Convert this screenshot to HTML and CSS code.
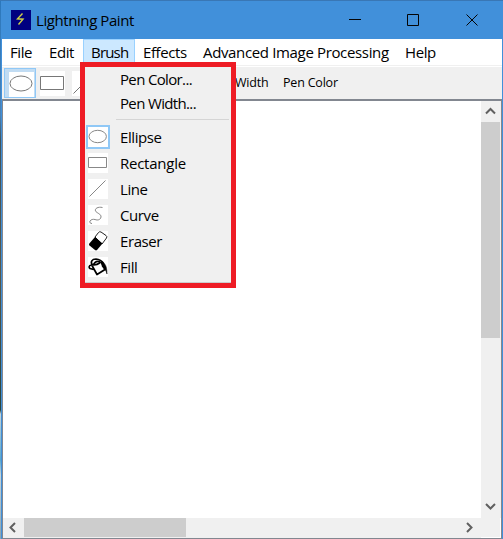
FILE: index.html
```html
<!DOCTYPE html>
<html lang="en">
<head>
<meta charset="utf-8">
<title>Lightning Paint</title>
<link rel="stylesheet" href="styles.css">
</head>
<body>
<div class="desktop">
<div class="window">
  <header class="titlebar">
    <svg class="app-icon" width="20" height="20" viewBox="0 0 20 20"><rect width="20" height="20" fill="#000080"/><path d="M11.500 3.500L6.500 8.800L12 9.200L7.500 14.500" fill="none" stroke="#d0d048" stroke-width="1.400"/></svg>
    <h1 class="title">Lightning Paint</h1>
    <svg class="controls" width="130" height="14" viewBox="0 0 130 14" fill="none" stroke="#050505"><path d="M0 6.500h12M58.500 1.500h11v11h-11zM117.500 1.500l11 11M128.500 1.500l-11 11"/></svg>
  </header>
  <nav class="menubar">
    <span class="item file">File</span><span class="item edit">Edit</span><span class="item brush">Brush</span><span class="item effects">Effects</span><span class="item advanced">Advanced Image Processing</span><span class="item help">Help</span>
  </nav>
  <div class="toolbar">
    <div class="tool selected"><svg width="25" height="25" viewBox="0 0 25 25" fill="none" stroke="#777"><rect width="25" height="25" fill="#fff" stroke="none"/><ellipse cx="12" cy="11.500" rx="11" ry="7.500"/></svg></div>
    <div class="tool rect"><svg width="25" height="25" viewBox="0 0 25 25" fill="none" stroke="#777"><rect width="25" height="25" fill="#fff" stroke="none"/><path d="M.5 5.500h23v13H.5z"/></svg></div>
    <div class="tool line"><svg width="25" height="25" viewBox="0 0 25 25" fill="none" stroke="#777"><rect width="25" height="25" fill="#fff" stroke="none"/><path d="M1.500 22.500l20-20"/></svg></div>
    <span class="label width">Width</span><span class="label color">Pen Color</span>
  </div>
  <main class="workspace">
    <div class="canvas"></div>
    <div class="vscroll">
      <svg class="arrow" width="19" height="21" viewBox="0 0 19 21" fill="none" stroke="#606060" stroke-width="2"><path d="M5 12.500l4.500-4.500 4.500 4.500"/></svg>
      <div class="vthumb"></div>
      <svg class="arrow" width="19" height="21" viewBox="0 0 19 21" fill="none" stroke="#606060" stroke-width="2"><path d="M5 7l4.500 4.500 4.500-4.500"/></svg>
    </div>
    <div class="hscroll">
      <svg class="arrow" width="21" height="19" viewBox="0 0 21 19" fill="none" stroke="#606060" stroke-width="2"><path d="M12 5L7.500 9.500l4.500 4.500"/></svg>
      <div class="hthumb"></div>
      <svg class="arrow" width="21" height="19" viewBox="0 0 21 19" fill="none" stroke="#606060" stroke-width="2"><path d="M7 5l4.500 4.500-4.500 4.500"/></svg>
    </div>
    <div class="corner"></div>
  </main>
</div>
</div>
<div class="menu">
  <div class="plain">Pen Color...</div>
  <div class="plain">Pen Width...</div>
  <div class="separator"></div>
  <div class="row"><span class="icon checked"><svg width="20" height="20" viewBox="0 0 20 20" fill="none" stroke="#888"><ellipse cx="9.700" cy="9.500" rx="8.700" ry="6.200"/></svg></span>Ellipse</div>
  <div class="row"><span class="icon"><svg width="20" height="20" viewBox="0 0 20 20" fill="none" stroke="#888"><path d="M.5 4.500h18v10H.5z"/></svg></span><span class="rectangle">Rectangle</span></div>
  <div class="row"><span class="icon"><svg width="20" height="20" viewBox="0 0 20 20" fill="none" stroke="#888"><path d="M1.500 17.500l16-16"/></svg></span>Line</div>
  <div class="row"><span class="icon"><svg width="20" height="20" viewBox="0 0 20 20" fill="none" stroke="#888"><path d="M14.500 2.500C10 1.500 6.500 3.500 7.500 6c1 2 6 3 5.500 6-.5 3-3.500 3.500-6 2.500-2-.5-4 0-5 1.500-.8 1.500.5 2.500 2 2.500"/></svg></span>Curve</div>
  <div class="row"><span class="icon"><svg width="20" height="20" viewBox="0 0 20 20"><path d="M10.500 1.500Q11.500.3 13 1l5 3.500q1.500 1 .5 2.500l-4.500 6L7 6z" fill="#fff" stroke="#222"/><path d="M7 6l7.500 6.500-5.500 6.500q-1 .8-2 0L1.500 14.500q-1-1-.2-2z" fill="#000"/></svg></span>Eraser</div>
  <div class="row"><span class="icon"><svg width="20" height="20" viewBox="0 0 20 20" fill="none" stroke="#000" stroke-width="1.700" stroke-linejoin="round"><path d="M4 8.500L9 17.500l8-5L13 5M3.500 8C.5 8.500.8 10.500 2 11.500l3.500 1M4.500 8C2 5 4 2 8 2c4 .2 6 2 8 5M5 8.500C6.500 5 9 4 11 4.500s0 3-5 3.500"/><path d="M14 5.500c3 .5 5 3.500 5 11.500-1-4-3-6-5-7.500z" fill="#000" stroke-width=".5"/></svg></span>Fill</div>
</div>
</body>
</html>
```
FILE: styles.css
```css
* { box-sizing: border-box; }
body { margin: 0; width: 503px; height: 539px; overflow: hidden; font-family: "Open Sans", "Noto Sans", sans-serif; font-size: 15px; color: #000; }
svg { display: block; flex: none; }
.desktop { height: 539px; padding: 1px 0 0 1px; background: linear-gradient(#2b78bd 0, #4a83b8 115px, #41545b 140px, #5a594a 270px, #29453e 410px, #c7d5da 414px, #5aa7cc 460px, #c7d5da 475px, #8ca4b0 539px); box-shadow: inset 0 1px #3977b5; }
.window { height: 538px; border-left: 1px solid #4190da; border-right: 1px solid #4190da; background: #fff; }
.titlebar { height: 38px; background: #4190da; display: flex; align-items: center; padding: 0 23px 0 9px; }
.title { margin: 0 0 0 5px; font-size: 15px; font-weight: 400; letter-spacing: -.42px; white-space: nowrap; }
.controls { margin-left: auto; }
.menubar { height: 27px; display: flex; border-bottom: 1px solid #f0f0f0; padding-left: 8px; }
.item { height: 25px; line-height: 27px; white-space: nowrap; letter-spacing: -.4px; }
.file { width: 39px; }
.edit { width: 34px; }
.brush { width: 52px; padding-left: 7px; background: #cce8ff; border: 1px solid #99d1ff; border-bottom: 0; line-height: 25px; letter-spacing: -.8px; }
.effects { width: 68px; padding-left: 8px; }
.advanced { width: 202px; letter-spacing: -.35px; }
.toolbar { height: 32px; margin-top: 1px; background: #f0f0f0; display: flex; align-items: flex-start; padding: 1px 0 0 2px; }
.tool { width: 32px; height: 30px; }
.selected { background: #c1dcf3; border: 1px solid #90c8f6; padding: 3px 0 0 4px; }
.rect { padding: 3px 0 0 4px; }
.line { padding: 3px 0 0 4px; }
.label { font-size: 12.500px; line-height: 30px; letter-spacing: -.2px; white-space: nowrap; }
.width { margin-left: 135px; width: 48px; }
.workspace { height: 440px; border: 1px solid #828790; border-top-width: 2px; display: grid; grid-template-columns: 1fr 20px; grid-template-rows: 1fr 20px; }
.vscroll { background: #f0f0f0; display: flex; flex-direction: column; padding-right: 1px; }
.vthumb { height: 216px; background: #cdcdcd; }
.vscroll .arrow:last-child { margin-top: auto; }
.hscroll { background: #f0f0f0; display: flex; }
.hthumb { width: 162px; height: 19px; background: #cdcdcd; }
.hscroll .arrow:last-child { margin-left: auto; }
.corner { background: #f0f0f0; border-right: 1px solid #fff; border-bottom: 1px solid #fff; }
.menu { position: absolute; left: 80px; top: 62px; width: 156px; height: 226px; border: 5px solid #ee1c25; background: #f0f0f0; box-shadow: inset 0 -1px #ccc; letter-spacing: -.4px; white-space: nowrap; }
.plain { height: 24px; line-height: 25px; padding-left: 35px; letter-spacing: -.65px; }
.rectangle { letter-spacing: -.25px; }
.separator { height: 1px; margin: 4px 2px 4px 31px; background: #d5d5d5; }
.row { height: 26px; display: flex; align-items: center; line-height: 26px; }
.icon { width: 20px; height: 20px; margin: 0 12px 0 3px; background: #fff; }
.checked { width: 24px; height: 24px; margin: 0 10px 0 1px; border: 2px solid #90c8f6; }
```
